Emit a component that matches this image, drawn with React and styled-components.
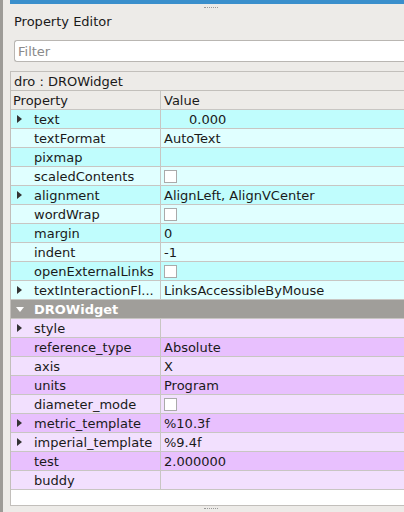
import React from "react";
import styled, { createGlobalStyle } from "styled-components";

const G = createGlobalStyle`
  body{margin:0;background:#edebe8;font-family:"DejaVu Sans",sans-serif;font-size:12px;color:#1a1a1a;}
`;
const Page = styled.div`display:flex;width:404px;height:512px;overflow:hidden;`;
const Strip = styled.div`width:3px;background:#9d9b97;flex:none;`;
const Main = styled.div`flex:1;display:flex;flex-direction:column;position:relative;`;
const TopBar = styled.div`height:4px;background:#3a8fcc;margin-left:7px;`;
const Title = styled.div`padding:9px 0 0 11px;height:26px;box-sizing:border-box;font-size:13px;margin-top:1px;`;
const Filter = styled.div`margin:9px 0 0 11px;height:22px;background:#fff;border:1px solid #b9b6b2;border-right:none;border-radius:3px 0 0 3px;color:#8a8a8a;font-size:13px;padding:3px 0 0 3px;box-sizing:border-box;`;
const ObjName = styled.div`margin:9px 0 0 7px;height:19px;border:1px solid #c2bfbb;border-right:none;border-bottom:none;padding:2px 0 0 3px;box-sizing:border-box;font-size:13px;`;
const Table = styled.div`margin-left:7px;border:1px solid #c2bfbb;border-right:none;background:#fff;height:414px;`;
const Row = styled.div`display:grid;grid-template-columns:150px 1fr;height:19px;background:${p=>p.bg};border-bottom:1px solid #c8c6c3;box-sizing:border-box;font-size:13px;`;
const Cell = styled.div`display:flex;align-items:center;padding-left:${p=>p.pl||0}px;border-right:${p=>p.r?"1px solid #c8c6c3":"none"};white-space:nowrap;overflow:hidden;position:relative;${p=>p.bold?"font-weight:bold;color:#fff;":""}`;
const Arrow = styled.span`position:absolute;left:6px;top:5px;width:0;height:0;${p=>p.down?"border-left:4px solid transparent;border-right:4px solid transparent;border-top:5px solid #fff;top:7px;left:5px;":"border-top:4px solid transparent;border-bottom:4px solid transparent;border-left:5px solid #333;"}`;
const Check = styled.span`width:13px;height:13px;background:#fff;border:1px solid #aaa;box-sizing:border-box;`;
const Grip = styled.div`position:absolute;left:50%;top:${p=>p.t}px;width:14px;border-top:1px dotted #999;`;

const C1="#c0fdfd",C2="#e0ffff",P1="#e8c0fe",P2="#f2e0fe";
const rows=[
 ["text","0.000",C1,1,0,"val"],["textFormat","AutoText",C2],["pixmap","",C1],["scaledContents","",C2,0,1],
 ["alignment","AlignLeft, AlignVCenter",C1,1],["wordWrap","",C2,0,1],["margin","0",C1],["indent","-1",C2],
 ["openExternalLinks","",C1,0,1],["textInteractionFl...","LinksAccessibleByMouse",C2,1],
];
const rows2=[
 ["style","",P2,1],["reference_type","Absolute",P1],["axis","X",P2],["units","Program",P1],["diameter_mode","",P2,0,1],
 ["metric_template","%10.3f",P1,1],["imperial_template","%9.4f",P2,1],["test","2.000000",P1],["buddy","",P2],
];
const R=({r})=>(
 <Row bg={r[2]}>
  <Cell r pl={23}>{r[3]?<Arrow/>:null}{r[0]}</Cell>
  <Cell pl={r[5]?28:3}>{r[4]?<Check/>:r[1]}</Cell>
 </Row>
);
export default function App(){
 return <Page><G/><Strip/><Main>
  <TopBar/><Grip t={7}/>
  <Title>Property Editor</Title>
  <Filter>Filter</Filter>
  <ObjName>dro : DROWidget</ObjName>
  <Table>
   <Row bg="#edebe8"><Cell r pl={2}>Property</Cell><Cell pl={3}>Value</Cell></Row>
   {rows.map(r=><R key={r[0]} r={r}/>)}
   <Row bg="#a09e9a"><Cell bold pl={23}><Arrow down/>DROWidget</Cell><Cell/></Row>
   {rows2.map(r=><R key={r[0]} r={r}/>)}
  </Table>
  <Grip t={508}/>
 </Main></Page>;
}
